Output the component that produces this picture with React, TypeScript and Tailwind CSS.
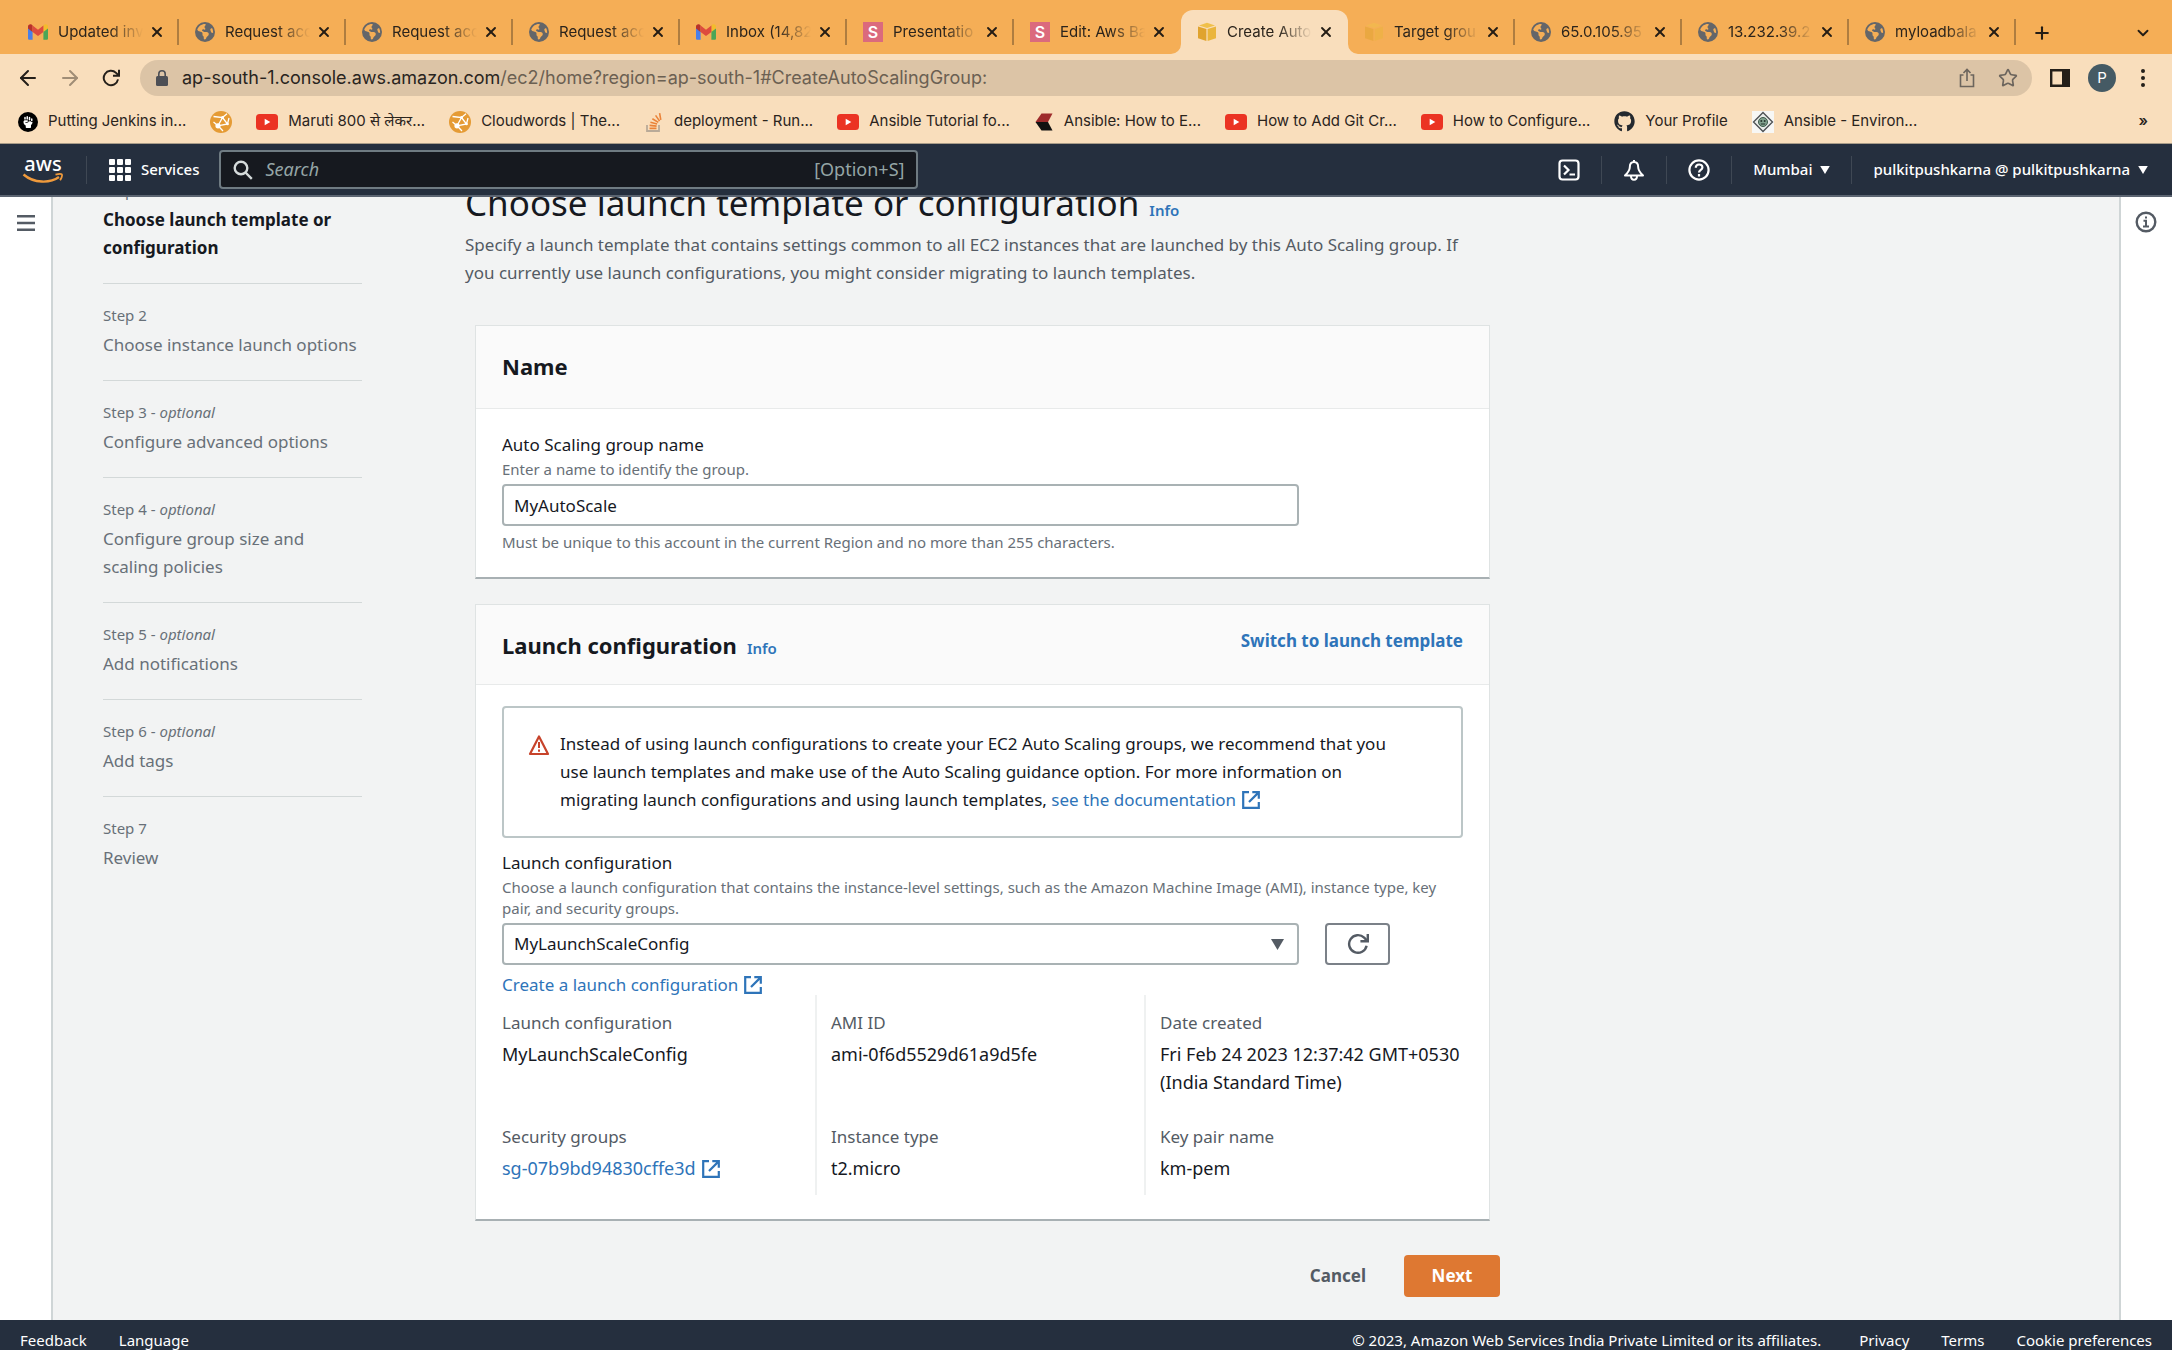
import { ReactNode } from "react";
import { ArrowLeft, ArrowRight, ChevronDown, Plus, Star, X } from "lucide-react";
import { FaEarthAmericas, FaGithub, FaHandFist } from "react-icons/fa6";

type IconName =
    | "gmail"
    | "globe"
    | "slides"
    | "aws"
    | "awsPale"
    | "fist"
    | "cloud"
    | "youtube"
    | "stack"
    | "chevrons"
    | "github"
    | "diamond";

const tabs: { title: string; icon: IconName; active?: boolean }[] = [
    { title: "Updated inv", icon: "gmail" },
    { title: "Request acc", icon: "globe" },
    { title: "Request acc", icon: "globe" },
    { title: "Request acc", icon: "globe" },
    { title: "Inbox (14,82", icon: "gmail" },
    { title: "Presentatio", icon: "slides" },
    { title: "Edit: Aws Ba", icon: "slides" },
    { title: "Create Auto", icon: "aws", active: true },
    { title: "Target grou", icon: "awsPale" },
    { title: "65.0.105.95", icon: "globe" },
    { title: "13.232.39.2", icon: "globe" },
    { title: "myloadbala", icon: "globe" },
];

const bookmarks: { title?: string; icon: IconName }[] = [
    { title: "Putting Jenkins in...", icon: "fist" },
    { icon: "cloud" },
    { title: "Maruti 800 से लेकर...", icon: "youtube" },
    { title: "Cloudwords | The...", icon: "cloud" },
    { title: "deployment - Run...", icon: "stack" },
    { title: "Ansible Tutorial fo...", icon: "youtube" },
    { title: "Ansible: How to E...", icon: "chevrons" },
    { title: "How to Add Git Cr...", icon: "youtube" },
    { title: "How to Configure...", icon: "youtube" },
    { title: "Your Profile", icon: "github" },
    { title: "Ansible - Environ...", icon: "diamond" },
];

const steps: { title: string; optional?: boolean }[] = [
    { title: "Choose launch template or configuration" },
    { title: "Choose instance launch options" },
    { title: "Configure advanced options", optional: true },
    { title: "Configure group size and scaling policies", optional: true },
    { title: "Add notifications", optional: true },
    { title: "Add tags", optional: true },
    { title: "Review" },
];

const SiteIcon = ({ name }: { name: IconName }) => {
    switch (name) {
        case "gmail":
            return (
                <svg viewBox="0 0 20 16" className="h-4 w-5 shrink-0">
                    <path d="M0 3v11.5c0 .8.6 1.3 1.4 1.3h3.2V7.5z" fill="#4a7fe8" />
                    <path d="M20 3v11.5c0 .8-.6 1.3-1.4 1.3h-3.2V7.5z" fill="#4ba557" />
                    <path d="M15.4 1.6V8L20 4.4V2.6c0-2-2.2-3-3.8-1.8z" fill="#f3bc2c" />
                    <path d="M4.6 1.6V8L0 4.4V2.6C0 .6 2.2-.4 3.8.8z" fill="#b8322b" />
                    <path d="M4.6 8V1.6L10 5.7l5.4-4.1V8L10 12z" fill="#dd4b3e" />
                </svg>
            );
        case "globe":
            return <FaEarthAmericas className="size-5 shrink-0 text-[#646669]" />;
        case "slides":
            return (
                <span className="flex size-5 shrink-0 items-center justify-center bg-[#db6a7d] text-base font-semibold text-white">
                    S
                </span>
            );
        case "aws":
        case "awsPale":
            return (
                <svg
                    viewBox="0 0 20 20"
                    className={name === "aws" ? "size-5 shrink-0" : "size-5 shrink-0 opacity-50"}
                >
                    <path d="M1 4.5 9.4 7v12L1 16.2z" fill="#e0a32e" />
                    <path d="M19 4.5 10.6 7v12l8.4-2.8z" fill="#eab53c" />
                    <path d="m10 .8 8 2.7-8 2.5-8-2.5z" fill="#f0c04a" />
                </svg>
            );
        case "fist":
            return (
                <span className="flex size-5 shrink-0 items-center justify-center rounded-full bg-black">
                    <FaHandFist className="size-3 text-white" />
                </span>
            );
        case "cloud":
            return (
                <svg viewBox="0 0 22 22" className="size-[22px] shrink-0">
                    <circle cx="11" cy="11" r="11" fill="#e59b35" />
                    <path
                        d="M3.5 5.5 12.500 6.500 8 14.800M12.500 6.500 17.500 13 8 14.800 3.500 11M12.500 6.500 17 2.800M17.500 13 19 7M8 14.800 13 20"
                        fill="none"
                        stroke="#fff"
                        strokeWidth="1.3"
                    />
                    <circle cx="8" cy="14.8" r="2.6" fill="#fff" />
                    <circle cx="12.5" cy="6.5" r="1.5" fill="#fff" />
                    <circle cx="17.5" cy="13" r="1.3" fill="#fff" />
                </svg>
            );
        case "youtube":
            return (
                <svg viewBox="0 0 22 16" className="h-4 w-[22px] shrink-0">
                    <rect width="22" height="16" rx="3.5" fill="#eb3323" />
                    <path d="m8.7 4.8 5.6 3.2-5.6 3.2z" fill="#fff" />
                </svg>
            );
        case "stack":
            return (
                <svg viewBox="0 0 20 20" className="size-5 shrink-0" fill="none">
                    <path d="M3 13v6h12v-6" stroke="#b9aa98" strokeWidth="1.8" />
                    <path
                        d="M5.5 16.4h7M5.6 13.4l7 .7M6.4 10.2l6.7 1.9M8.4 6.8l5.9 3.6M11.6 3.4l4 5.7M15.6 1.2l1.2 6.6"
                        stroke="#ea8339"
                        strokeWidth="1.6"
                    />
                </svg>
            );
        case "chevrons":
            return (
                <svg viewBox="0 0 20 20" className="size-5 shrink-0">
                    <path d="M7.5 1.5h11L14 10H1.5z" fill="#9e2b2b" />
                    <path d="M1.5 10H14l4.500 8.500h-11z" fill="#111" />
                </svg>
            );
        case "github":
            return <FaGithub className="size-[21px] shrink-0 text-[#24292f]" />;
        case "diamond":
            return (
                <svg viewBox="0 0 22 22" className="size-[22px] shrink-0">
                    <rect width="22" height="22" fill="#f7f7f5" />
                    <path d="m11 1.5 9.5 9.5-9.5 9.5L1.5 11z" fill="#e8ece9" stroke="#4b4f52" strokeWidth="1.3" />
                    <circle cx="11" cy="11" r="4.5" fill="#7fa08d" stroke="#3d5a4b" />
                    <circle cx="9.3" cy="10" r="1" fill="#26352d" />
                    <circle cx="12.7" cy="10" r="1" fill="#26352d" />
                    <path d="M8.8 13h4.4" stroke="#26352d" />
                </svg>
            );
    }
};

const ReloadIcon = ({ className }: { className?: string }) => (
    <svg viewBox="0 0 20 20" className={className} fill="none" stroke="currentColor" strokeWidth="2.2">
        <path d="M17.8 11.5A8 8 0 1 1 15.6 4.3L18 6.6" />
        <path d="M18.9.8v6.7h-6.7" />
    </svg>
);

const ExternalIcon = () => (
    <svg viewBox="0 0 18 18" className="ml-1.5 inline size-[18px] align-[-3px]" fill="none" stroke="currentColor" strokeWidth="2.2">
        <path d="M7 1.2H1.2v15.6h15.6V11" />
        <path d="M10.3 1.2h6.5v6.5M16.4 1.6 7 11" />
    </svg>
);

const Caret = ({ className }: { className?: string }) => (
    <svg viewBox="0 0 12 10" className={className} fill="currentColor">
        <path d="M0 0h12L6 10z" />
    </svg>
);

const TabStrip = () => (
    <div className="flex h-[54px] items-end bg-[#f5ae56] pl-3">
        {tabs.map((tab, i) => (
            <div
                key={i}
                className={
                    tab.active
                        ? "relative flex h-11 max-w-[167px] min-w-0 flex-1 items-center rounded-t-xl bg-[#f9debc] pl-4"
                        : "flex h-11 max-w-[167px] min-w-0 flex-1 items-center pl-4"
                }
            >
                {tab.active && (
                    // curved feet of the selected tab
                    <>
                        <svg viewBox="0 0 10 10" className="absolute bottom-0 -left-2.5 size-2.5" fill="#f9debc">
                            <path d="M10 0v10H0A10 10 0 0 0 10 0z" />
                        </svg>
                        <svg viewBox="0 0 10 10" className="absolute -right-2.5 bottom-0 size-2.5" fill="#f9debc">
                            <path d="M0 0v10h10A10 10 0 0 1 0 0z" />
                        </svg>
                    </>
                )}
                <SiteIcon name={tab.icon} />
                <span className="ml-2.5 flex-1 overflow-hidden text-[15px] whitespace-nowrap text-[#2b241c] [mask-image:linear-gradient(to_right,black_60%,transparent)]">
                    {tab.title}
                </span>
                <button className="ml-1.5 shrink-0" aria-label="Close tab">
                    <X className="size-4 text-[#241d15]" strokeWidth={2.8} />
                </button>
                <span
                    className={
                        tab.active || tabs[i + 1]?.active
                            ? "ml-3 h-[26px] w-0.5"
                            : "ml-3 h-[26px] w-0.5 bg-[#ae7d40]"
                    }
                />
            </div>
        ))}
        <button className="mb-[11px] ml-4" aria-label="New tab">
            <Plus className="block size-5 text-[#241d15]" strokeWidth={2.5} />
        </button>
        <button className="mr-5 mb-3 ml-auto" aria-label="Search tabs">
            <ChevronDown className="block size-[18px] text-[#241d15]" strokeWidth={2.5} />
        </button>
    </div>
);

const Toolbar = () => (
    <div className="flex h-12 items-center pr-5 pl-4 text-[#241f19]">
        <button aria-label="Back">
            <ArrowLeft className="size-6" />
        </button>
        <button className="ml-[18px] text-[#a08d76]" aria-label="Forward">
            <ArrowRight className="size-6" />
        </button>
        <button className="ml-5" aria-label="Reload">
            <ReloadIcon className="size-[18px]" />
        </button>
        <div className="ml-5 flex h-9 flex-1 items-center rounded-full bg-[#dcc4a6] pr-3.5 pl-3">
            <svg viewBox="0 0 12 16" className="mx-1 h-4 w-3">
                <rect y="6" width="12" height="10" rx="1.5" fill="#4d4f55" />
                <path d="M2.8 7V4a3.2 3.2 0 0 1 6.4 0v3" fill="none" stroke="#4d4f55" strokeWidth="1.6" />
            </svg>
            <p className="ml-2.5 flex-1 text-lg text-[#6b6052]">
                <span className="text-[#29241e]">ap-south-1.console.aws.amazon.com</span>
                /ec2/home?region=ap-south-1#CreateAutoScalingGroup:
            </p>
            <button aria-label="Share">
                <svg viewBox="0 0 18 20" className="h-5 w-[18px]" fill="none" stroke="#6c655d" strokeWidth="1.6">
                    <path d="M5.5 7h-3v11.5h13V7h-3M9 13V1.5M5.5 5 9 1.5 12.5 5" />
                </svg>
            </button>
            <button className="ml-[22px]" aria-label="Bookmark this tab">
                <Star className="size-5 text-[#6c655d]" />
            </button>
        </div>
        <button className="ml-[18px]" aria-label="Side panel">
            <svg viewBox="0 0 20 18" className="h-[18px] w-5">
                <path d="M1.2 1.2h17.6v15.6H1.2z" fill="none" stroke="currentColor" strokeWidth="2.4" />
                <path d="M12 0h8v18h-8z" fill="currentColor" />
            </svg>
        </button>
        <button
            className="ml-[18px] flex size-7 items-center justify-center rounded-full bg-[#455a64] text-[15px] text-white"
            aria-label="Profile"
        >
            P
        </button>
        <button className="ml-[18px]" aria-label="Menu">
            <svg viewBox="0 0 18 18" className="size-[18px]" fill="currentColor">
                <circle cx="9" cy="2" r="2" />
                <circle cx="9" cy="9" r="2" />
                <circle cx="9" cy="16" r="2" />
            </svg>
        </button>
    </div>
);

const Bookmarks = () => (
    <div className="flex h-[42px] items-center gap-6 border-b border-[#a99c88] pr-6 pb-0.5 pl-[18px] text-[15px] whitespace-nowrap text-[#2b241c]">
        {bookmarks.map(({ title, icon }, i) => (
            <a key={i} href="#" className="flex items-center gap-2.5" aria-label={title ?? "Cloudwords"}>
                <SiteIcon name={icon} />
                {title && <span>{title}</span>}
            </a>
        ))}
        <button className="ml-auto font-semibold" aria-label="More bookmarks">
            »
        </button>
    </div>
);

const NavDivider = () => <span className="h-7 w-px bg-[#3f4854]" />;

const ConsoleNav = () => (
    <nav className="flex h-[53px] items-center border-b-2 border-[#5b6471] bg-[#252f3e] pr-6 pl-[22px] text-[15px] font-medium text-white">
        <a href="#" className="flex w-[42px] flex-col items-center" aria-label="AWS home">
            <span className="text-xl leading-4 font-medium">aws</span>
            <svg viewBox="0 0 42 12" className="h-3 w-[42px]" fill="none" stroke="#ef9a3c">
                <path d="M1.5 2.500C12 11.5 28 11.5 37 5" strokeWidth="2.4" />
                <path d="M33.5 2.6c3-.8 5.5-.9 6.2-.3.7.8-.2 3.7-1.6 6" strokeWidth="1.8" />
            </svg>
        </a>
        <span className="ml-[22px] h-7 w-px bg-[#3f4854]" />
        <button className="ml-[22px] flex items-center gap-2.5">
            <svg viewBox="0 0 22 22" className="size-[22px]" fill="currentColor">
                {[0, 8, 16].map((y) =>
                    [0, 8, 16].map((x) => <rect key={`${x}-${y}`} x={x} y={y} width="6" height="6" rx="1" />)
                )}
            </svg>
            Services
        </button>
        <label className="ml-5 flex h-[39px] w-[699px] items-center rounded-sm border-2 border-[#6f7b82] bg-[#16191f] px-3">
            <svg viewBox="0 0 20 20" className="size-5" fill="none" stroke="#d5dbdb" strokeWidth="2.4">
                <circle cx="8" cy="8" r="6.3" />
                <path d="m12.5 12.5 6.3 6.3" />
            </svg>
            <input
                type="text"
                aria-label="Search"
                placeholder="Search"
                className="ml-3 min-w-0 flex-1 text-[18px] font-normal outline-none placeholder:text-[#95a5a6] placeholder:italic"
            />
            <span className="text-[18px] font-normal text-[#95a5a6]">[Option+S]</span>
        </label>
        <div className="ml-auto flex items-center gap-[21px]">
            <button aria-label="CloudShell">
                <svg viewBox="0 0 22 22" className="size-[22px]" fill="none" stroke="currentColor" strokeWidth="2.2">
                    <rect x="1.5" y="1.5" width="19" height="19" rx="3" />
                    <path d="m6 6.5 4.5 4.5L6 15.5M11.5 15.5H17" />
                </svg>
            </button>
            <NavDivider />
            <button aria-label="Notifications">
                <svg viewBox="0 0 22 22" className="size-[22px]" fill="none" stroke="currentColor" strokeWidth="2">
                    <path
                        d="M11 1v2M11 3c-3.2 0-4.2 2.300-4.2 5.200 0 3.300-1.500 5-4.800 8.300h18c-3.300-3.300-4.800-5-4.800-8.300C15.200 5.300 14.200 3 11 3z"
                        strokeLinejoin="round"
                    />
                    <path d="M8 17c0 2.500 1.2 3.800 3 3.800s3-1.300 3-3.800" />
                </svg>
            </button>
            <NavDivider />
            <button aria-label="Help">
                <svg viewBox="0 0 22 22" className="size-[22px]" fill="none" stroke="currentColor" strokeWidth="2.2">
                    <circle cx="11" cy="11" r="9.600" />
                    <path d="M7.8 8.8c0-4.300 6.600-4.300 6.600-.4 0 2.500-3.400 2.400-3.400 5.200M11 15v2.400" />
                </svg>
            </button>
            <NavDivider />
            <button className="flex items-center gap-2">
                Mumbai
                <Caret className="h-2 w-2.5" />
            </button>
            <NavDivider />
            <button className="flex items-center gap-2">
                pulkitpushkarna @ pulkitpushkarna
                <Caret className="h-2 w-2.5" />
            </button>
        </div>
    </nav>
);

const Steps = () => (
    <ol className="-mt-[38px] w-[259px] shrink-0">
        {steps.map((step, i) => (
            <li
                key={step.title}
                className="border-b border-[#d3d8d8] pt-5 pb-[21px] text-[#687078] last:border-b-0"
            >
                <p className="mb-[5px] text-[15px] leading-[22px]">
                    Step {i + 1}
                    {step.optional && (
                        <>
                            {" - "}
                            <i>optional</i>
                        </>
                    )}
                </p>
                <p className={i === 0 ? "text-[17px] leading-7 font-bold text-[#16191f]" : "text-[17px] leading-7"}>
                    {step.title}
                </p>
            </li>
        ))}
    </ol>
);

const Card = ({ header, children }: { header: ReactNode; children: ReactNode }) => (
    <section className="mx-2.5 border border-b-2 border-[#dfe3e3] border-b-[#a8b0b3] bg-white">
        <header className="flex items-start justify-between border-b border-[#e8eaea] bg-[#fafafa] px-[26px] pt-6 pb-5">
            {header}
        </header>
        {children}
    </section>
);

const Detail = ({ label, children }: { label: string; children: ReactNode }) => (
    <div className="h-[114px] last:h-[72px]">
        <dt className="leading-7 text-[#545b64]">{label}</dt>
        <dd className="mt-[3px] text-[18px] leading-7">{children}</dd>
    </div>
);

const LaunchConfigCard = () => (
    <Card
        header={
            <>
                <h2 className="text-[22px] leading-8 font-bold">
                    Launch configuration
                    <a href="#" className="ml-2.5 text-[15px] font-semibold text-[#2e74b9]">
                        Info
                    </a>
                </h2>
                <a href="#" className="text-[17px] leading-6 font-bold text-[#2e74b9]">
                    Switch to launch template
                </a>
            </>
        }
    >
        <div className="px-[26px] pt-[21px] pb-6 text-[17px]">
            <div className="flex gap-2.5 rounded-sm border-2 border-[#bcc6c7] px-6 py-[22px]">
                <svg viewBox="0 0 22 22" className="mt-1 size-[22px] shrink-0" fill="none" stroke="#c7432b">
                    <path d="M11 2.5 20 20H2z" strokeWidth="2.2" strokeLinejoin="round" />
                    <path d="M11 8v6M11 15.5v2.3" strokeWidth="2" />
                </svg>
                <p className="max-w-[836px] leading-7">
                    Instead of using launch configurations to create your EC2 Auto Scaling groups, we recommend that
                    you use launch templates and make use of the Auto Scaling guidance option. For more information on
                    migrating launch configurations and using launch templates,{" "}
                    <a href="#" className="text-[#2e74b9]">
                        see the documentation
                        <ExternalIcon />
                    </a>
                </p>
            </div>
            <label htmlFor="launch-config" className="mt-[13px] block leading-6">
                Launch configuration
            </label>
            <p className="mt-0.5 text-[15px] leading-[21px] text-[#687078]">
                Choose a launch configuration that contains the instance-level settings, such as the Amazon Machine
                Image (AMI), instance type, key pair, and security groups.
            </p>
            <div className="mt-1 flex gap-[26px]">
                <div className="relative w-[797px]">
                    <select
                        id="launch-config"
                        className="h-[42px] w-full appearance-none rounded-sm border-2 border-[#a9b2b4] bg-white px-2.5"
                    >
                        <option>MyLaunchScaleConfig</option>
                    </select>
                    <Caret className="pointer-events-none absolute top-4 right-[15px] h-[11px] w-[13px] text-[#545b64]" />
                </div>
                <button
                    className="flex h-[42px] w-[65px] items-center justify-center rounded-sm border-2 border-[#7b8188] text-[#545b64]"
                    aria-label="Refresh"
                >
                    <ReloadIcon className="size-[22px]" />
                </button>
            </div>
            <a href="#" className="mt-1.5 block leading-7 text-[#2e74b9]">
                Create a launch configuration
                <ExternalIcon />
            </a>
            <div className="-mt-1 grid grid-cols-[329px_329px_1fr]">
                <dl className="mr-3.5 border-r-2 border-[#eff1f1] pt-3.5">
                    <Detail label="Launch configuration">MyLaunchScaleConfig</Detail>
                    <Detail label="Security groups">
                        <a href="#" className="text-[#2e74b9]">
                            sg-07b9bd94830cffe3d
                            <ExternalIcon />
                        </a>
                    </Detail>
                </dl>
                <dl className="mr-3.5 border-r-2 border-[#eff1f1] pt-3.5">
                    <Detail label="AMI ID">ami-0f6d5529d61a9d5fe</Detail>
                    <Detail label="Instance type">t2.micro</Detail>
                </dl>
                <dl className="pt-3.5">
                    <Detail label="Date created">Fri Feb 24 2023 12:37:42 GMT+0530 (India Standard Time)</Detail>
                    <Detail label="Key pair name">km-pem</Detail>
                </dl>
            </div>
        </div>
    </Card>
);

export default function App() {
    return (
        <div className="flex h-screen flex-col overflow-hidden font-['Noto_Sans',sans-serif] text-[#16191f]">
            <div className="bg-[#f9debc] font-[Inter,'Noto_Sans',sans-serif]">
                <TabStrip />
                <Toolbar />
                <Bookmarks />
            </div>
            <ConsoleNav />
            <div className="flex min-h-0 flex-1">
                <aside className="w-[53px] shrink-0 border-r-2 border-[#cfd5d6] bg-white pt-4 pl-[17px]">
                    <button aria-label="Open navigation">
                        <svg viewBox="0 0 18 16" className="h-4 w-[18px]" fill="#545b64">
                            <path d="M0 0h18v2.5H0zM0 6.750h18v2.5H0zM0 13.5h18V16H0z" />
                        </svg>
                    </button>
                </aside>
                <div className="flex flex-1 gap-[103px] overflow-hidden bg-[#f2f3f3] pl-[50px]">
                    <Steps />
                    <form className="-mt-[15px] max-w-[1035px] flex-1" onSubmit={(e) => e.preventDefault()}>
                        <h1 className="text-[35px] leading-[42px]">
                            Choose launch template or configuration
                            <a href="#" className="ml-2.5 text-[15px] font-semibold text-[#2e74b9]">
                                Info
                            </a>
                        </h1>
                        <p className="mb-[38px] max-w-[1016px] text-[17px] leading-7 text-[#545b64]">
                            Specify a launch template that contains settings common to all EC2 instances that are
                            launched by this Auto Scaling group. If you currently use launch configurations, you might
                            consider migrating to launch templates.
                        </p>
                        <Card header={<h2 className="pb-1.5 text-[22px] leading-8 font-bold">Name</h2>}>
                            <div className="px-[26px] py-6">
                                <label htmlFor="group-name" className="block text-[17px] leading-6">
                                    Auto Scaling group name
                                </label>
                                <p className="mt-0.5 text-[15px] leading-[21px] text-[#687078]">
                                    Enter a name to identify the group.
                                </p>
                                <input
                                    id="group-name"
                                    type="text"
                                    defaultValue="MyAutoScale"
                                    className="my-1 block h-[42px] w-[797px] rounded-sm border-2 border-[#a9b2b4] px-2.5 text-[17px]"
                                />
                                <p className="pt-0.5 text-[15px] leading-[21px] text-[#687078]">
                                    Must be unique to this account in the current Region and no more than 255
                                    characters.
                                </p>
                            </div>
                        </Card>
                        <div className="h-[25px]" />
                        <LaunchConfigCard />
                        <div className="mt-[34px] flex justify-end gap-[38px] text-[17px] font-bold">
                            <button type="button" className="text-[#545b64]">
                                Cancel
                            </button>
                            <button type="submit" className="h-[42px] w-24 rounded-sm bg-[#de7832] text-white">
                                Next
                            </button>
                        </div>
                    </form>
                </div>
                <aside className="w-[53px] shrink-0 border-l-2 border-[#cfd5d6] bg-white pt-[14px] pl-[14px]">
                    <button aria-label="Info panel">
                        <svg viewBox="0 0 22 22" className="size-[22px]" fill="none" stroke="#545b64">
                            <circle cx="11" cy="11" r="9.3" strokeWidth="2.4" />
                            <path d="M8.5 9.7H11v5.5M8 15.500h6M10 6.5h2" strokeWidth="2" />
                        </svg>
                    </button>
                </aside>
            </div>
            <footer className="flex h-[30px] shrink-0 items-end gap-8 bg-[#252f3e] px-5 text-[15px] leading-5 text-white">
                <a href="#">Feedback</a>
                <a href="#">Language</a>
                <p className="mr-1.5 ml-auto">
                    © 2023, Amazon Web Services India Private Limited or its affiliates.
                </p>
                <a href="#">Privacy</a>
                <a href="#">Terms</a>
                <a href="#">Cookie preferences</a>
            </footer>
        </div>
    );
}
